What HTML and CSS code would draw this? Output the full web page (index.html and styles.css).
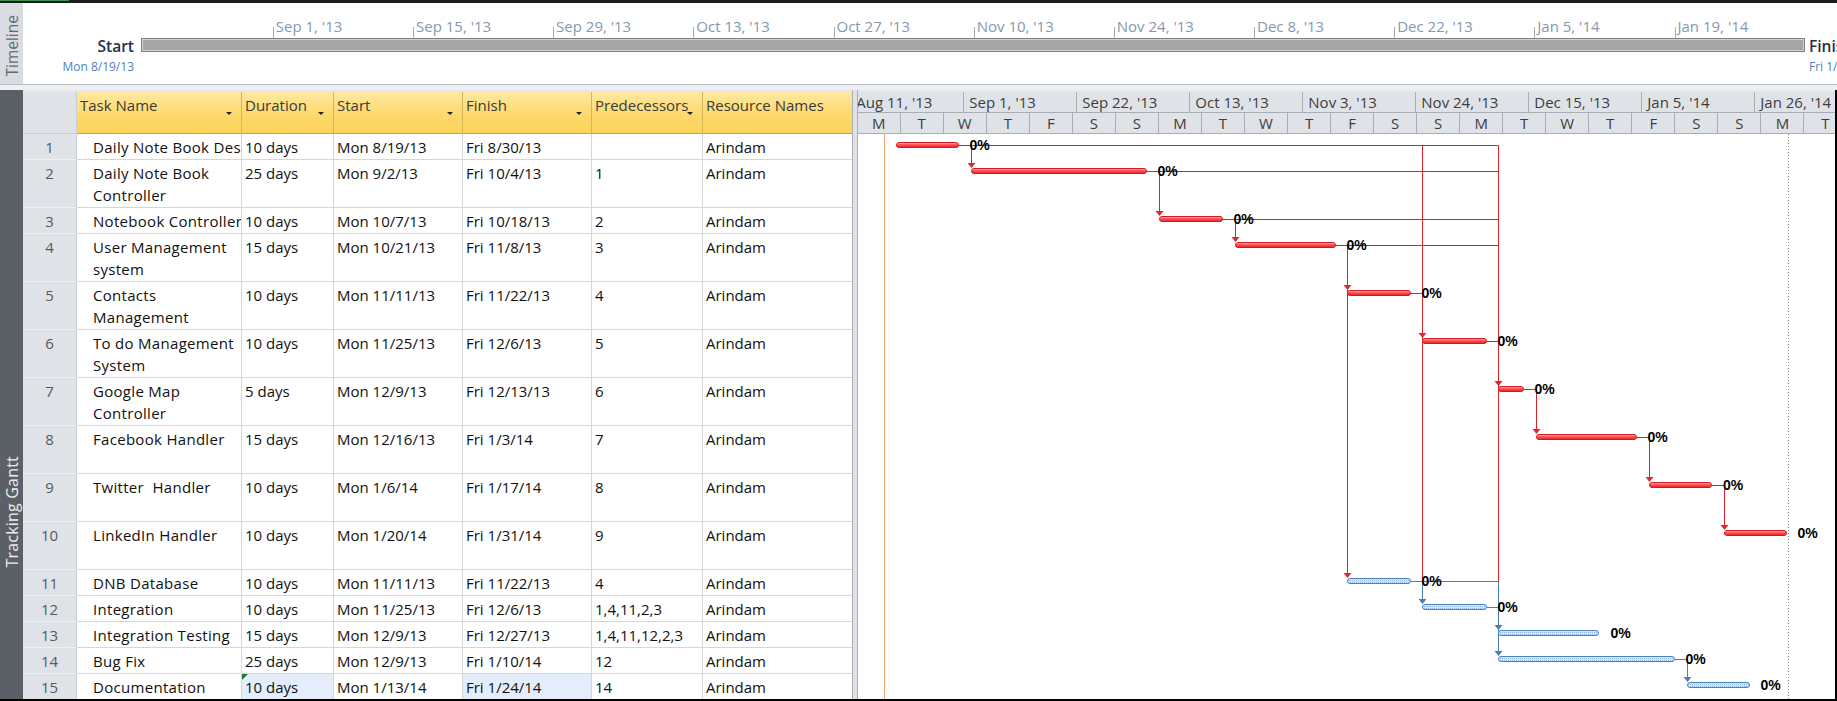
FILE: index.html
```html
<!DOCTYPE html>
<html>
<head>
<meta charset="utf-8">
<title>Tracking Gantt</title>
<link rel="stylesheet" href="styles.css">
</head>
<body>
<div class="app">
  <div class="topbar"><span class="topbar-green"></span></div>

  <div class="timeline">
    <div class="side side-light"><span class="vt">Timeline</span></div>
    <div class="tl-body">
      <div class="tl-start">
        <div class="tl-big">Start</div>
        <div class="tl-small">Mon 8/19/13</div>
      </div>
      <div class="tl-track">
        <div class="tick" style="left:131.8px">Sep 1, '13</div>
        <div class="tick" style="left:272.0px">Sep 15, '13</div>
        <div class="tick" style="left:412.1px">Sep 29, '13</div>
        <div class="tick" style="left:552.3px">Oct 13, '13</div>
        <div class="tick" style="left:692.5px">Oct 27, '13</div>
        <div class="tick" style="left:832.7px">Nov 10, '13</div>
        <div class="tick" style="left:972.8px">Nov 24, '13</div>
        <div class="tick" style="left:1113.0px">Dec 8, '13</div>
        <div class="tick" style="left:1253.2px">Dec 22, '13</div>
        <div class="tick" style="left:1393.3px">Jan 5, '14</div>
        <div class="tick" style="left:1533.5px">Jan 19, '14</div>
        <div class="tl-bar"></div>
      </div>
      <div class="tl-finish">
        <div class="tl-big">Finish</div>
        <div class="tl-small">Fri 1/31/14</div>
      </div>
    </div>
  </div>

  <div class="sep"></div>

  <div class="view">
    <div class="side side-dark"><span class="vt">Tracking Gantt</span></div>

    <div class="sheet">
      <div class="h hnum"></div>
      <div class="h dd">Task Name</div>
      <div class="h dd">Duration</div>
      <div class="h dd">Start</div>
      <div class="h dd">Finish</div>
      <div class="h dd">Predecessors</div>
      <div class="h last">Resource Names</div>

      <div class="c num">1</div><div class="c name">Daily Note Book Design</div><div class="c">10 days</div><div class="c">Mon 8/19/13</div><div class="c">Fri 8/30/13</div><div class="c"></div><div class="c last">Arindam</div>
      <div class="c num">2</div><div class="c name">Daily Note Book<br>Controller</div><div class="c">25 days</div><div class="c">Mon 9/2/13</div><div class="c">Fri 10/4/13</div><div class="c">1</div><div class="c last">Arindam</div>
      <div class="c num">3</div><div class="c name">Notebook Controller</div><div class="c">10 days</div><div class="c">Mon 10/7/13</div><div class="c">Fri 10/18/13</div><div class="c">2</div><div class="c last">Arindam</div>
      <div class="c num">4</div><div class="c name">User Management<br>system</div><div class="c">15 days</div><div class="c">Mon 10/21/13</div><div class="c">Fri 11/8/13</div><div class="c">3</div><div class="c last">Arindam</div>
      <div class="c num">5</div><div class="c name">Contacts<br>Management</div><div class="c">10 days</div><div class="c">Mon 11/11/13</div><div class="c">Fri 11/22/13</div><div class="c">4</div><div class="c last">Arindam</div>
      <div class="c num">6</div><div class="c name">To do Management<br>System</div><div class="c">10 days</div><div class="c">Mon 11/25/13</div><div class="c">Fri 12/6/13</div><div class="c">5</div><div class="c last">Arindam</div>
      <div class="c num">7</div><div class="c name">Google Map<br>Controller</div><div class="c">5 days</div><div class="c">Mon 12/9/13</div><div class="c">Fri 12/13/13</div><div class="c">6</div><div class="c last">Arindam</div>
      <div class="c num">8</div><div class="c name">Facebook Handler</div><div class="c">15 days</div><div class="c">Mon 12/16/13</div><div class="c">Fri 1/3/14</div><div class="c">7</div><div class="c last">Arindam</div>
      <div class="c num">9</div><div class="c name">Twitter&nbsp; Handler</div><div class="c">10 days</div><div class="c">Mon 1/6/14</div><div class="c">Fri 1/17/14</div><div class="c">8</div><div class="c last">Arindam</div>
      <div class="c num">10</div><div class="c name">LinkedIn Handler</div><div class="c">10 days</div><div class="c">Mon 1/20/14</div><div class="c">Fri 1/31/14</div><div class="c">9</div><div class="c last">Arindam</div>
      <div class="c num">11</div><div class="c name">DNB Database</div><div class="c">10 days</div><div class="c">Mon 11/11/13</div><div class="c">Fri 11/22/13</div><div class="c">4</div><div class="c last">Arindam</div>
      <div class="c num">12</div><div class="c name">Integration</div><div class="c">10 days</div><div class="c">Mon 11/25/13</div><div class="c">Fri 12/6/13</div><div class="c">1,4,11,2,3</div><div class="c last">Arindam</div>
      <div class="c num">13</div><div class="c name">Integration Testing</div><div class="c">15 days</div><div class="c">Mon 12/9/13</div><div class="c">Fri 12/27/13</div><div class="c">1,4,11,12,2,3</div><div class="c last">Arindam</div>
      <div class="c num">14</div><div class="c name">Bug Fix</div><div class="c">25 days</div><div class="c">Mon 12/9/13</div><div class="c">Fri 1/10/14</div><div class="c">12</div><div class="c last">Arindam</div>
      <div class="c num">15</div><div class="c name">Documentation</div><div class="c sel note">10 days</div><div class="c">Mon 1/13/14</div><div class="c sel">Fri 1/24/14</div><div class="c">14</div><div class="c last">Arindam</div>
    </div>

    <div class="divider"></div>

    <div class="chart">
      <div class="chart-head">
        <div class="tier tier-top">
          <div class="tc">Aug 11, '13</div>
          <div class="tc">Sep 1, '13</div>
          <div class="tc">Sep 22, '13</div>
          <div class="tc">Oct 13, '13</div>
          <div class="tc">Nov 3, '13</div>
          <div class="tc">Nov 24, '13</div>
          <div class="tc">Dec 15, '13</div>
          <div class="tc">Jan 5, '14</div>
          <div class="tc">Jan 26, '14</div>
        </div>
        <div class="tier tier-bot">
          <div class="bc">M</div><div class="bc">T</div><div class="bc">W</div><div class="bc">T</div><div class="bc">F</div><div class="bc">S</div><div class="bc">S</div>
          <div class="bc">M</div><div class="bc">T</div><div class="bc">W</div><div class="bc">T</div><div class="bc">F</div><div class="bc">S</div><div class="bc">S</div>
          <div class="bc">M</div><div class="bc">T</div><div class="bc">W</div><div class="bc">T</div><div class="bc">F</div><div class="bc">S</div><div class="bc">S</div>
          <div class="bc">M</div><div class="bc">T</div>
        </div>
      </div>
      <svg class="gantt" width="977" height="565" viewBox="0 0 977 565">
        <defs>
          <linearGradient id="rg" x1="0" y1="0" x2="0" y2="1">
            <stop offset="0" stop-color="#ffc4c4"/>
            <stop offset="0.45" stop-color="#ff5050"/>
            <stop offset="1" stop-color="#e8222a"/>
          </linearGradient>
          <pattern id="bp" width="2" height="2" patternUnits="userSpaceOnUse">
            <rect width="2" height="2" fill="#d9e6f6"/>
            <rect width="1" height="1" fill="#8fb3de"/>
          </pattern>
        </defs>

        <line x1="26.5" y1="0" x2="26.5" y2="565" stroke="#f3a06a" stroke-width="1"/>
        <line x1="930.5" y1="0" x2="930.5" y2="565" stroke="#8a8a8a" stroke-width="1" stroke-dasharray="1 2"/>

        <g class="lk-red" fill="none" stroke="#d9222a" stroke-width="1">
          <path d="M100.5 11.5 H640.5"/>
          <path d="M289 37.5 H640.5"/>
          <path d="M364 85.5 H640.5"/>
          <path d="M477.5 111.5 H640.5"/>
          <path d="M553 159.5 H564.5"/>
          <path d="M628.5 207.5 H640.5"/>
          <path d="M666 255.5 H678.5 V298"/>
          <path d="M778.5 303.5 H791.5 V346"/>
          <path d="M854 351.5 H866.5 V394"/>
          <path d="M113.5 11.5 V32"/>
          <path d="M301.5 37.5 V80"/>
          <path d="M377.5 85.5 V106"/>
          <path d="M489.5 111.5 V442"/>
          <path d="M564.5 11.5 V447.5"/>
          <path d="M640.5 11.5 V447.5"/>
        </g>
        <g class="lk-blue" fill="none" stroke="#4a7ebb" stroke-width="1">
          <path d="M553 447.5 H640.5"/>
          <path d="M564.5 447.5 V468"/>
          <path d="M628.5 473.5 H640.5"/>
          <path d="M640.5 447.5 V520"/>
          <path d="M816.5 525.5 H829.5 V546"/>
        </g>

        <g fill="#e0262e">
          <polygon points="109.5,29 117.5,29 113.5,34"/>
          <polygon points="297.5,77 305.5,77 301.5,82"/>
          <polygon points="373.5,103 381.5,103 377.5,108"/>
          <polygon points="485.5,151 493.5,151 489.5,156"/>
          <polygon points="485.5,439 493.5,439 489.5,444"/>
          <polygon points="560.5,199 568.5,199 564.5,204"/>
          <polygon points="636.5,247 644.5,247 640.5,252"/>
          <polygon points="674.5,295 682.5,295 678.5,300"/>
          <polygon points="787.5,343 795.5,343 791.5,348"/>
          <polygon points="862.5,391 870.5,391 866.5,396"/>
        </g>
        <g fill="#4a7ebb">
          <polygon points="560.5,465 568.5,465 564.5,470"/>
          <polygon points="636.5,491 644.5,491 640.5,496"/>
          <polygon points="636.5,517 644.5,517 640.5,522"/>
          <polygon points="825.5,543 833.5,543 829.5,548"/>
        </g>

        <g fill="url(#rg)" stroke="#cf1c24" stroke-width="1">
          <rect x="38.5" y="8.5" width="62" height="5" rx="2.5"/>
          <rect x="113.5" y="34.5" width="175" height="5" rx="2.5"/>
          <rect x="301.5" y="82.5" width="63" height="5" rx="2.5"/>
          <rect x="377.5" y="108.5" width="100" height="5" rx="2.5"/>
          <rect x="489.5" y="156.5" width="63" height="5" rx="2.5"/>
          <rect x="564.5" y="204.5" width="64" height="5" rx="2.5"/>
          <rect x="640.5" y="252.5" width="25" height="5" rx="2.5"/>
          <rect x="678.5" y="300.5" width="100" height="5" rx="2.5"/>
          <rect x="791.5" y="348.5" width="62" height="5" rx="2.5"/>
          <rect x="866.5" y="396.5" width="62" height="5" rx="2.5"/>
        </g>
        <g fill="url(#bp)" stroke="#4f81bd" stroke-width="1">
          <rect x="489.5" y="444.5" width="63" height="5" rx="2.5"/>
          <rect x="564.5" y="470.5" width="64" height="5" rx="2.5"/>
          <rect x="640.5" y="496.5" width="100" height="5" rx="2.5"/>
          <rect x="640.5" y="522.5" width="176" height="5" rx="2.5"/>
          <rect x="829.5" y="548.5" width="62" height="5" rx="2.5"/>
        </g>

        <g class="pct">
          <text x="111.5" y="16">0%</text>
          <text x="299.5" y="42">0%</text>
          <text x="375.5" y="90">0%</text>
          <text x="488.5" y="116">0%</text>
          <text x="563.5" y="164">0%</text>
          <text x="639.5" y="212">0%</text>
          <text x="676.5" y="260">0%</text>
          <text x="789.5" y="308">0%</text>
          <text x="865" y="356">0%</text>
          <text x="939.5" y="404">0%</text>
          <text x="563.5" y="452">0%</text>
          <text x="639.5" y="478">0%</text>
          <text x="752.5" y="504">0%</text>
          <text x="827.5" y="530">0%</text>
          <text x="902.5" y="556">0%</text>
        </g>
      </svg>
    </div>
  </div>
</div>
</body>
</html>
```

FILE: styles.css
```css
html, body {
  margin: 0;
  padding: 0;
  background: #ffffff;
}

body {
  font-family: "Open Sans", "DejaVu Sans", sans-serif;
}

.app {
  width: 1837px;
  height: 701px;
  overflow: hidden;
  display: flex;
  flex-direction: column;
  background: #ffffff;
}

/* top window edge */
.topbar {
  flex: none;
  height: 3px;
  background: #1c1c1c;
}

.topbar-green {
  display: block;
  width: 69px;
  height: 1px;
  background: #3e9150;
}

/* side labels */
.side {
  flex: none;
  width: 23px;
  display: flex;
  align-items: center;
  box-sizing: border-box;
}

.vt {
  writing-mode: vertical-rl;
  transform: rotate(180deg);
  font-size: 16px;
  line-height: 20px;
  white-space: nowrap;
  letter-spacing: 0.2px;
}

.side-light {
  background: #d9dde2;
  color: #666a70;
  justify-content: center;
  padding-top: 4px;
}

.side-light .vt {
  font-size: 15.5px;
  letter-spacing: 0;
}

.side-dark {
  background: #5b6067;
  color: #e9ecef;
  flex-direction: column;
  justify-content: flex-end;
  padding-bottom: 131px;
}

/* timeline pane */
.timeline {
  flex: none;
  height: 81px;
  display: flex;
}

.tl-body {
  flex: 1;
  min-width: 0;
  display: flex;
  align-items: flex-start;
}

.tl-start {
  flex: none;
  width: 111px;
  text-align: right;
  padding-top: 33px;
}

.tl-finish {
  flex: none;
  margin-left: 4px;
  padding-top: 33px;
  white-space: nowrap;
}

.tl-big {
  font-size: 15.5px;
  line-height: 20px;
  font-weight: 600;
  color: #1f3049;
}

.tl-small {
  font-size: 12px;
  line-height: 16px;
  margin-top: 3px;
  color: #4f7fbf;
}

.tl-track {
  flex: none;
  width: 1664px;
  margin-left: 7px;
  padding-top: 35px;
  position: relative;
}

.tl-bar {
  height: 14px;
  box-sizing: border-box;
  background: #a6a6a6;
  border: 1px solid #7f7f7f;
  box-shadow: inset 0 0 0 1px #d2d2d2;
}

.tick {
  position: absolute;
  top: 13px;
  padding-left: 3px;
  font-size: 15px;
  line-height: 20px;
  color: #8697b0;
  white-space: nowrap;
}

.tick::before {
  content: "";
  position: absolute;
  left: 0;
  top: 11px;
  height: 11px;
  border-left: 1px solid #a5aebb;
}

.sep {
  flex: none;
  height: 6px;
  box-sizing: border-box;
  border-top: 1px solid #b8bdc4;
  background: #eef0f2;
}

/* gantt view */
.view {
  flex: none;
  height: 611px;
  display: flex;
  box-sizing: border-box;
  border-bottom: 2px solid #000000;
}

.sheet {
  flex: none;
  width: 829px;
  overflow: hidden;
  box-sizing: border-box;
  padding-top: 2px;
  background: #e4e7eb;
  display: grid;
  grid-template-columns: 54px 165px 92px 129px 129px 111px 149px;
  grid-template-rows: 42px 26px 48px 26px 48px 48px 48px 48px 48px 48px 48px 26px 26px 26px 26px 26px;
  align-content: start;
}

.h {
  box-sizing: border-box;
  position: relative;
  background: linear-gradient(#fee9a2, #fdd96c 55%, #fcd35a);
  border-right: 1px solid #d6b45b;
  border-bottom: 1px solid #c9a34a;
  padding: 2px 3px 0;
  font-size: 15px;
  line-height: 22px;
  color: #3a3a3a;
  white-space: nowrap;
  overflow: hidden;
}

.h.hnum {
  background: #dfe3e8;
  border-right-color: #c9ced5;
  border-bottom-color: #c9ced5;
}

.h.dd::after {
  content: "";
  position: absolute;
  right: 9px;
  top: 20px;
  border-left: 3px solid transparent;
  border-right: 3px solid transparent;
  border-top: 3px solid #222222;
}

.h.last {
  border-right: none;
}

.c {
  box-sizing: border-box;
  position: relative;
  background: #ffffff;
  border-right: 1px solid #d6d6d6;
  border-bottom: 1px solid #d6d6d6;
  padding: 2px 3px 0;
  font-size: 15px;
  line-height: 22px;
  color: #111111;
  white-space: nowrap;
  overflow: hidden;
}

.c.num {
  background: #dfe3e8;
  color: #555a60;
  text-align: center;
  padding-left: 0;
  padding-right: 0;
  border-right-color: #c9ced5;
  border-bottom-color: #eef0f3;
}

.c.name {
  padding-left: 16px;
  padding-right: 0;
  letter-spacing: 0.3px;
}

.c.last {
  border-right: none;
}

.c.sel {
  background: #e4eefa;
}

.c.note::before {
  content: "";
  position: absolute;
  left: 0;
  top: 0;
  border-top: 6px solid #1f7a35;
  border-right: 6px solid transparent;
}

.divider {
  flex: none;
  width: 6px;
  box-sizing: border-box;
  background: #dfe3e8;
  border-left: 1px solid #a9aeb5;
  border-right: 1px solid #a9aeb5;
}

.chart {
  flex: none;
  width: 979px;
  box-sizing: border-box;
  border-right: 2px solid #000000;
  overflow: hidden;
  background: #ffffff;
}

.chart-head {
  border-top: 2px solid #e4e7eb;
  background: #dfe3e8;
}

.tier {
  display: flex;
  height: 21px;
  box-sizing: border-box;
  border-bottom: 1px solid #a9aeb5;
  overflow: hidden;
  white-space: nowrap;
  font-size: 15px;
  line-height: 20px;
  color: #3d3d3d;
}

.tc {
  flex: 0 0 113px;
  box-sizing: border-box;
  border-right: 1px solid #a9aeb5;
  padding-left: 5px;
  overflow: hidden;
}

.tc:first-child {
  margin-left: -6.7px;
}

.bc {
  flex: 0 0 43.04px;
  box-sizing: border-box;
  border-right: 1px solid #a9aeb5;
  text-align: center;
}

.bc:first-child {
  margin-left: -0.3px;
}

.gantt {
  display: block;
}

.pct text {
  font-family: "Liberation Sans", Arial, sans-serif;
  font-size: 14px;
  font-weight: 700;
  fill: #000000;
}
```
